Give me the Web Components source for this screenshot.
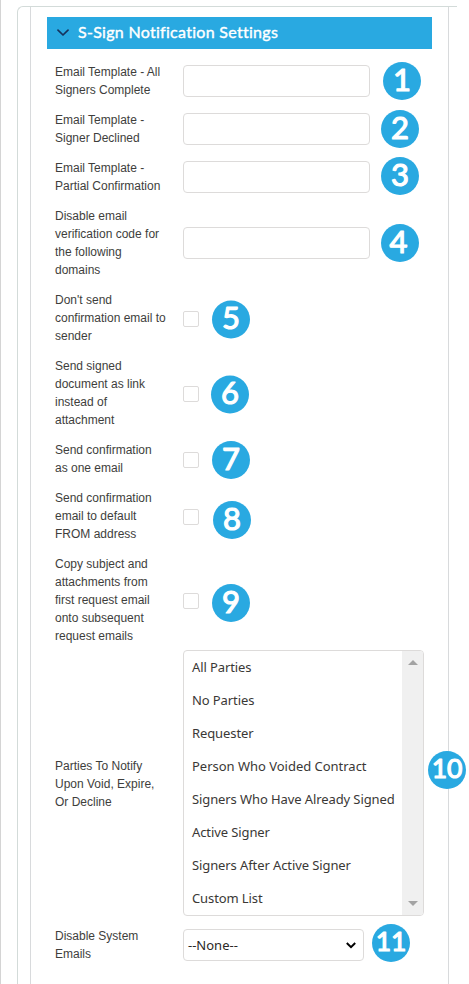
<!DOCTYPE html>
<html lang="en">
<head>
    <meta charset="UTF-8" />
    <meta name="viewport" content="width=device-width, initial-scale=1.0" />
    <title>S-Sign Notification Settings</title>
    <style>
        body {
            margin: 0;
            height: 984px;
            overflow: hidden;
            background: #fff;
            font-family: "Liberation Sans", Arial, sans-serif;
        }
    </style>
</head>

<body>
<settings-panel>
    <section-header slot="header">S-Sign Notification Settings</section-header>
    <setting-row>Email Template - All Signers Complete
        <text-field slot="control"></text-field>
        <step-badge slot="badge" style="--x: 13px">1</step-badge>
    </setting-row>
    <setting-row>Email Template - Signer Declined
        <text-field slot="control"></text-field>
        <step-badge slot="badge" style="--x: 11px">2</step-badge>
    </setting-row>
    <setting-row>Email Template - Partial Confirmation
        <text-field slot="control"></text-field>
        <step-badge slot="badge" style="--x: 11px; --y: -1px">3</step-badge>
    </setting-row>
    <setting-row>Disable email verification code for the following domains
        <text-field slot="control"></text-field>
        <step-badge slot="badge" style="--x: 11px; --n: -1.5px">4</step-badge>
    </setting-row>
    <setting-row>Don't send confirmation email to sender
        <check-box slot="control"></check-box>
        <step-badge slot="badge" style="--x: 13px; --y: 1.5px">5</step-badge>
    </setting-row>
    <setting-row>Send signed document as link instead of attachment
        <check-box slot="control"></check-box>
        <step-badge slot="badge" style="--x: 12px; --y: 1.5px">6</step-badge>
    </setting-row>
    <setting-row>Send confirmation as one email
        <check-box slot="control"></check-box>
        <step-badge slot="badge" style="--x: 13px; --y: 1px">7</step-badge>
    </setting-row>
    <setting-row>Send confirmation email to default FROM address
        <check-box slot="control"></check-box>
        <step-badge slot="badge" style="--x: 14px; --y: 4px">8</step-badge>
    </setting-row>
    <setting-row>Copy subject and attachments from first request email onto subsequent request emails
        <check-box slot="control"></check-box>
        <step-badge slot="badge" style="--x: 13px; --y: 3px">9</step-badge>
    </setting-row>
    <setting-row style="--label-top: 2px; height: 266px; padding: 0 0 4px; margin-top: -1px">Parties To Notify Upon Void, Expire, Or Decline
        <party-list slot="control"></party-list>
        <step-badge slot="badge" class="wide" style="--x: 4px; --y: -13px">10</step-badge>
    </setting-row>
    <setting-row style="padding-top: 7px">Disable System Emails
        <drop-down slot="control">--None--</drop-down>
        <step-badge slot="badge" class="wide" style="--x: 8px; --y: -2px">11</step-badge>
    </setting-row>
</settings-panel>

<script>
    // attach an open shadow root and fill it
    class BaseElement extends HTMLElement {
        constructor() {
            super();
            this.attachShadow({ mode: 'open' }).innerHTML = this.render();
        }
    }

    class SettingsPanel extends BaseElement {
        render() {
            return `
                <style>
                    :host {
                        display: block;
                        box-sizing: border-box;
                        height: 984px;
                        padding: 6px 0 0 16px;
                        border-left: 1px solid #d4d4d4;
                    }
                    .card {
                        box-sizing: border-box;
                        width: 440px;
                        height: 978px;
                        padding-left: 12px;
                        border: solid #d3dbd9;
                        border-width: 1px 0 0 1px;
                        border-radius: 6px 0 0 0;
                    }
                    .panel {
                        box-sizing: border-box;
                        width: 419px;
                        height: 977px;
                        padding: 10px 0 0 16px;
                        border: solid #d8dadc;
                        border-width: 0 1px;
                    }
                    .rows { padding: 8px 0 0 8px; }
                </style>
                <div class="card">
                    <div class="panel">
                        <slot name="header"></slot>
                        <div class="rows"><slot></slot></div>
                    </div>
                </div>`;
        }
    }

    class SectionHeader extends BaseElement {
        render() {
            return `
                <style>
                    :host {
                        display: flex;
                        align-items: center;
                        width: 385px;
                        height: 32px;
                        box-sizing: border-box;
                        padding-left: 10px;
                        background: #29a9e1;
                        color: #fff;
                        font: 400 16px/30px Lato, sans-serif;
                        letter-spacing: 0.29px;
                        -webkit-text-stroke: 0.4px #fff;
                        white-space: nowrap;
                    }
                    svg { margin-right: 9px; }
                    span { padding-bottom: 2px; }
                </style>
                <svg width="12" height="8" viewBox="0 0 12 8">
                    <path d="M1 1.2 L6 6 L11 1.2" fill="none" stroke="#16325c" stroke-width="1.7" stroke-linecap="round" stroke-linejoin="round"/>
                </svg>
                <span><slot></slot></span>`;
        }
    }

    class SettingRow extends BaseElement {
        render() {
            return `
                <style>
                    :host {
                        display: flex;
                        align-items: center;
                        padding: 6px 0;
                    }
                    .label {
                        flex: none;
                        width: 112px;
                        margin-right: 16px;
                        padding-top: var(--label-top, 0);
                        color: #3e3e3c;
                        font-size: 12px;
                        line-height: 18px;
                    }
                </style>
                <div class="label"><slot></slot></div>
                <slot name="control"></slot>
                <slot name="badge"></slot>`;
        }
    }

    class TextField extends BaseElement {
        render() {
            return `
                <style>
                    :host { display: block; flex: none; }
                    input {
                        display: block;
                        box-sizing: border-box;
                        width: 187px;
                        height: 32px;
                        margin: 0;
                        padding: 0 8px;
                        border: 1px solid #dddbda;
                        border-radius: 4px;
                        background: #fff;
                    }
                </style>
                <input type="text">`;
        }
    }

    class CheckBox extends BaseElement {
        render() {
            return `
                <style>
                    :host { display: block; flex: none; padding-top: 2px; }
                    input {
                        display: block;
                        appearance: none;
                        box-sizing: border-box;
                        width: 16px;
                        height: 16px;
                        margin: 0;
                        border: 1px solid #dddbda;
                        border-radius: 2px;
                        background: #fff;
                    }
                </style>
                <input type="checkbox">`;
        }
    }

    class StepBadge extends BaseElement {
        render() {
            return `
                <style>
                    :host {
                        display: block;
                        flex: none;
                        width: 38.4px;
                        height: 38.4px;
                        margin: -10px 0 -10px var(--x, 0);
                        border-radius: 50%;
                        background: #29a9e1;
                        transform: translateY(var(--y, 0));
                    }
                    svg { display: block; overflow: visible; }
                    text {
                        fill: #fff;
                        stroke: #fff;
                        stroke-width: 1.2px;
                        stroke-linejoin: round;
                        text-anchor: middle;
                        font: 400 31px Lato, sans-serif;
                        transform: translateX(var(--n, 0));
                    }
                    :host(.wide) text { font-size: 26.5px; }
                </style>
                <svg width="38.4" height="38.4">
                    <text x="19" y="${this.classList.contains('wide') ? 27 : 28.7}">${this.textContent}</text>
                </svg>`;
        }
    }

    class PartyList extends BaseElement {
        render() {
            const parties = [
                'All Parties', 'No Parties', 'Requester', 'Person Who Voided Contract',
                'Signers Who Have Already Signed', 'Active Signer',
                'Signers After Active Signer', 'Custom List'
            ];
            return `
                <style>
                    :host {
                        display: flex;
                        flex: none;
                        box-sizing: border-box;
                        width: 241px;
                        height: 266px;
                        border: 1px solid #dddbda;
                        border-radius: 4px;
                        overflow: hidden;
                        color: #3a3836;
                        font: 13px/33px "Noto Sans", sans-serif;
                        letter-spacing: -0.1px;
                    }
                    ul {
                        flex: 1;
                        margin: 0;
                        padding: 0 0 0 8px;
                        list-style: none;
                        white-space: nowrap;
                    }
                    li:nth-child(4) { letter-spacing: -0.02px; }
                    .bar {
                        display: flex;
                        flex-direction: column;
                        justify-content: space-between;
                        align-items: center;
                        box-sizing: border-box;
                        width: 21px;
                        padding: 9px 0;
                        background: #f0f0f0;
                    }
                </style>
                <ul>${parties.map(p => `<li>${p}</li>`).join('')}</ul>
                <div class="bar">
                    <svg width="10" height="5"><path d="M0 5 L5 0 L10 5Z" fill="#a3a3a3"/></svg>
                    <svg width="10" height="5"><path d="M0 0 L5 5 L10 0Z" fill="#a3a3a3"/></svg>
                </div>`;
        }
    }

    class DropDown extends BaseElement {
        render() {
            return `
                <style>
                    :host {
                        display: flex;
                        flex: none;
                        align-items: center;
                        justify-content: space-between;
                        box-sizing: border-box;
                        width: 181px;
                        height: 32px;
                        padding: 0 7px 0 4px;
                        border: 1px solid #dddbda;
                        border-radius: 4px;
                        color: #2b2826;
                        font: 13px/30px "Noto Sans", sans-serif;
                    }
                </style>
                <span><slot></slot></span>
                <svg width="10" height="7" viewBox="0 0 10 7">
                    <path d="M0.8 1 L5 5.2 L9.2 1" fill="none" stroke="#000" stroke-width="2"/>
                </svg>`;
        }
    }

    customElements.define('settings-panel', SettingsPanel);
    customElements.define('section-header', SectionHeader);
    customElements.define('setting-row', SettingRow);
    customElements.define('text-field', TextField);
    customElements.define('check-box', CheckBox);
    customElements.define('step-badge', StepBadge);
    customElements.define('party-list', PartyList);
    customElements.define('drop-down', DropDown);
</script>
</body>
</html>
